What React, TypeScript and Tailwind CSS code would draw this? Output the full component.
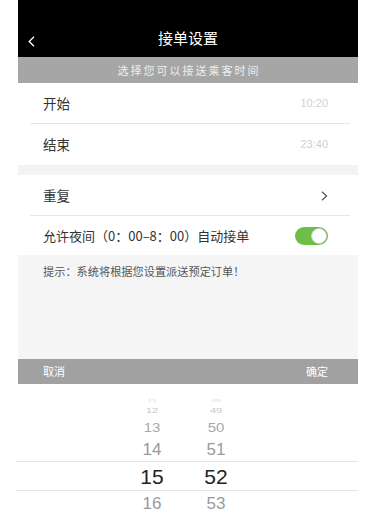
const font = { fontFamily: '"Noto Sans CJK SC", "Noto Sans", sans-serif' };

function Row({ label, right, line = true }: { label: string; right: React.ReactNode; line?: boolean }) {
  return (
    <div className="relative flex h-[41px] items-center justify-between bg-white pl-[25px] pr-[30px]">
      <span className="text-[13.5px] text-[#333]">{label}</span>
      {right}
      {line && <div className="absolute bottom-0 left-[12px] right-[8px] h-px bg-[#e6e6e6]" />}
    </div>
  );
}

function Toggle() {
  return (
    <div className="flex h-[18px] w-[33px] items-center justify-end rounded-full bg-[#6dbf47] p-[1px]">
      <div className="h-[16px] w-[16px] rounded-full border border-[#cfcfcf] bg-white" />
    </div>
  );
}

const hours = [
  { h: 'h-[8px]', cls: 'text-[9px] text-[#ddd] scale-y-[0.4]', a: '11', b: '48' },
  { h: 'h-[13px]', cls: 'text-[11px] text-[#c6c6c6] scale-y-[0.6]', a: '12', b: '49' },
  { h: 'h-[21px]', cls: 'text-[15px] text-[#a8a8a8] scale-y-[0.85]', a: '13', b: '50' },
  { h: 'h-[23px]', cls: 'text-[17px] text-[#9a9a9a]', a: '14', b: '51' },
];

export default function App() {
  return (
    <div className="h-[518px] w-full overflow-hidden bg-white" style={font}>
      <div className="ml-[18px] flex w-[340px] flex-col">
        {/* header */}
        <div className="relative flex h-[57px] items-end justify-center bg-black">
          <div className="flex h-[37px] items-center">
            <span className="text-[15px] text-white">接单设置</span>
          </div>
          <svg className="absolute left-[10px] top-[36px]" width="7" height="11" viewBox="0 0 7 11" fill="none">
            <path d="M6 0.8L1.2 5.5L6 10.2" stroke="#fff" strokeWidth="1.3" />
          </svg>
        </div>
        <div className="flex h-[26px] items-center justify-center bg-[#a6a6a6]">
          <span className="pl-[2px] text-[11px] tracking-[2px] text-[#eeeeee]">选择您可以接送乘客时间</span>
        </div>

        <Row label="开始" right={<span className="text-[11px] text-[#d0d0d0]" style={{ fontFamily: '"Liberation Sans", sans-serif' }}>10:20</span>} />
        <Row label="结束" line={false} right={<span className="text-[11px] text-[#d0d0d0]" style={{ fontFamily: '"Liberation Sans", sans-serif' }}>23:40</span>} />
        <div className="h-[10px] bg-[#f3f3f3]" />
        <Row
          label="重复"
          right={
            <svg width="7" height="10" viewBox="0 0 7 10" fill="none">
              <path d="M1 0.8L5.6 5L1 9.2" stroke="#555" strokeWidth="1.2" />
            </svg>
          }
        />
        <div className="flex h-[39px] items-center justify-between bg-white pl-[25px] pr-[30px]">
          <span className="text-[13px] text-[#333]">允许夜间（0：00–8：00）自动接单</span>
          <Toggle />
        </div>

        {/* hint */}
        <div className="h-[104px] bg-[#f5f5f5] pl-[25px] pt-[8px] text-[11.2px] leading-[16px] text-[#555]">
          提示：系统将根据您设置派送预定订单！
        </div>

        {/* action bar */}
        <div className="flex h-[25px] items-center justify-between bg-[#a1a1a1] pl-[25px] pr-[30px]">
          <span className="text-[11px] text-white">取消</span>
          <span className="text-[11px] text-white">确定</span>
        </div>

        {/* picker */}
        <div className="flex flex-col bg-white pt-[12px]" style={{ fontFamily: '"Liberation Sans", sans-serif' }}>
          {hours.map((r) => (
            <div key={r.a} className={`flex ${r.h} items-center`}>
              <span className={`w-[60px] ml-[104px] text-center leading-none ${r.cls}`}>{r.a}</span>
              <span className={`w-[60px] ml-[4px] text-center leading-none ${r.cls}`}>{r.b}</span>
            </div>
          ))}
          <div className="-ml-[2px] flex h-[30px] items-center border-y border-[#e4e4e4] pl-[2px]">
            <span className="ml-[104px] w-[60px] text-center text-[21px] leading-none text-[#222]">15</span>
            <span className="ml-[4px] w-[60px] text-center text-[21px] leading-none text-[#222]">52</span>
          </div>
          <div className="flex h-[24px] items-center">
            <span className="ml-[104px] w-[60px] text-center text-[17px] leading-none text-[#9a9a9a]">16</span>
            <span className="ml-[4px] w-[60px] text-center text-[17px] leading-none text-[#9a9a9a]">53</span>
          </div>
        </div>
      </div>
    </div>
  );
}
